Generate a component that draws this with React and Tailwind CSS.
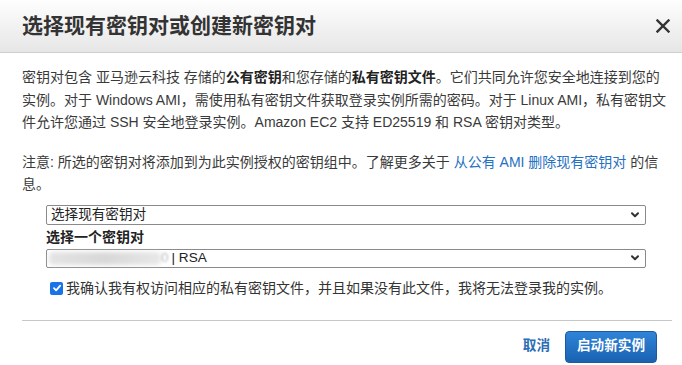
import React from "react";

const font = { fontFamily: '"Liberation Sans", "Noto Sans CJK SC", Arial, sans-serif' };

function Chevron() {
  return (
    <svg width="8" height="6" viewBox="0 0 8 6" className="shrink-0">
      <path d="M1 1.2 L4 4.2 L7 1.2" fill="none" stroke="#333" strokeWidth="2" strokeLinecap="round" strokeLinejoin="round" />
    </svg>
  );
}

export default function App() {
  return (
    <div className="w-[682px] h-[365px] bg-white overflow-hidden text-[#3a3a3a]" style={font}>
      <div className="h-[53px] flex items-center justify-between pl-[22px] pr-[12px] bg-gradient-to-b from-[#fefefe] to-[#e6e6e6] border-b border-[#cfcfcf]">
        <div className="text-[21px] font-bold text-[#333]">选择现有密钥对或创建新密钥对</div>
        <svg width="14" height="14" viewBox="0 0 14 14">
          <path d="M1.5 1.5 L12.5 12.5 M12.5 1.5 L1.5 12.5" stroke="#333" strokeWidth="2.4" strokeLinecap="square" />
        </svg>
      </div>
      <div className="pl-[22px] pr-[6px] pt-[13px] text-[14px] leading-[22.6px] whitespace-nowrap">
        <p>
          密钥对包含 亚马逊云科技 存储的<b className="text-[#222]">公有密钥</b>和您存储的<b className="text-[#222]">私有密钥文件</b>。它们共同允许您安全地连接到您的
          <br />
          实例。对于 Windows AMI，需使用私有密钥文件获取登录实例所需的密码。对于 Linux AMI，私有密钥文
          <br />
          件允许您通过 SSH 安全地登录实例。Amazon EC2 支持 ED25519 和 RSA 密钥对类型。
        </p>
        <p className="mt-[17px]">
          注意: 所选的密钥对将添加到为此实例授权的密钥组中。了解更多关于 <span className="text-[#2470c2]">从公有 AMI 删除现有密钥对</span> 的信
          <br />
          息。
        </p>
        <div className="ml-[24px] mr-[30px] mt-[9px]">
          <div className="h-[20px] border border-[#8a8a8a] rounded-[2px] flex items-center justify-between pl-[4px] pr-[6px] text-[13.6px] text-[#222]">
            <span>选择现有密钥对</span>
            <Chevron />
          </div>
          <div className="font-bold text-[#222] leading-[24px]">选择一个密钥对</div>
          <div className="h-[19px] border border-[#8a8a8a] rounded-[2px] flex items-center justify-between pl-[2px] pr-[6px] text-[13.6px] text-[#222]">
            <div className="flex items-center">
              <div className="w-[112px] h-[13px] bg-gradient-to-r from-[#e4e4e4] via-[#d8d8d8] to-[#e8e8e8] blur-[2px] rounded-sm" />
              <span className="text-[#bbb] blur-[1px] mr-[3px]">0</span>
              <span>| RSA</span>
            </div>
            <Chevron />
          </div>
          <div className="flex items-center mt-[9px] ml-[4px]">
            <div className="w-[13px] h-[13px] rounded-[2px] bg-[#1a73e8] flex items-center justify-center shrink-0">
              <svg width="10" height="10" viewBox="0 0 10 10">
                <path d="M2 5.2 L4.1 7.3 L8.2 2.6" fill="none" stroke="white" strokeWidth="1.8" strokeLinecap="round" strokeLinejoin="round" />
              </svg>
            </div>
            <span className="ml-[3px] text-[#333]">我确认我有权访问相应的私有密钥文件，并且如果没有此文件，我将无法登录我的实例。</span>
          </div>
        </div>
      </div>
      <div className="ml-[22px] mr-[10px] mt-[20px] border-t border-[#c8c8c8]" />
      <div className="flex items-center justify-end pr-[25px] pt-[10px] gap-[15px]">
        <span className="text-[13.6px] font-bold text-[#2a6db4]">取消</span>
        <div className="w-[92px] h-[32px] rounded-[4px] bg-gradient-to-b from-[#2f84d8] to-[#1a62b2] border border-[#1a5aa3] flex items-center justify-center text-white font-bold text-[13.6px]">
          启动新实例
        </div>
      </div>
    </div>
  );
}
